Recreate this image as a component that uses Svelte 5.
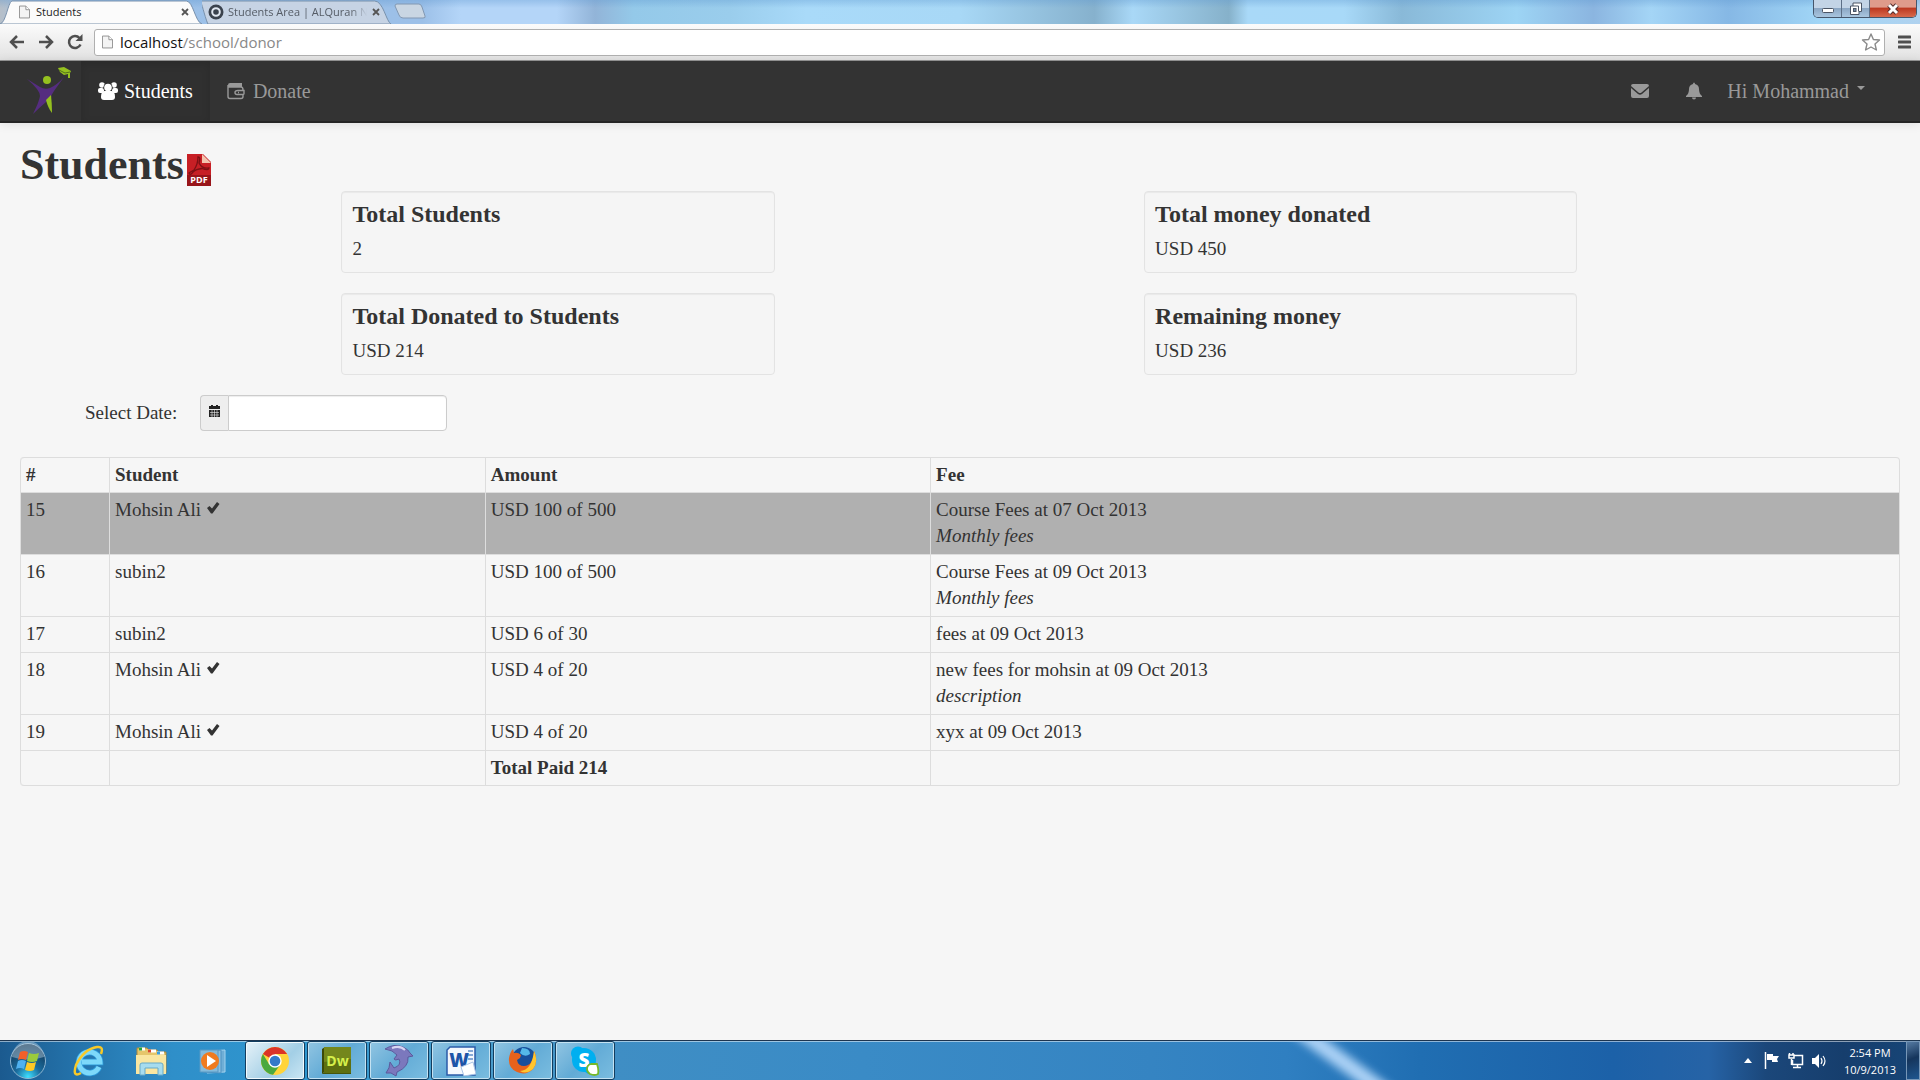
<script>
  const summary = [
    { title: 'Total Students', value: '2' },
    { title: 'Total money donated', value: 'USD 450' },
    { title: 'Total Donated to Students', value: 'USD 214' },
    { title: 'Remaining money', value: 'USD 236' }
  ];

  const payments = [
    { id: 15, student: 'Mohsin Ali', ticked: true, amount: 'USD 100 of 500', fee: 'Course Fees at 07 Oct 2013', note: 'Monthly fees', highlighted: true },
    { id: 16, student: 'subin2', ticked: false, amount: 'USD 100 of 500', fee: 'Course Fees at 09 Oct 2013', note: 'Monthly fees' },
    { id: 17, student: 'subin2', ticked: false, amount: 'USD 6 of 30', fee: 'fees at 09 Oct 2013', note: '' },
    { id: 18, student: 'Mohsin Ali', ticked: true, amount: 'USD 4 of 20', fee: 'new fees for mohsin at 09 Oct 2013', note: 'description' },
    { id: 19, student: 'Mohsin Ali', ticked: true, amount: 'USD 4 of 20', fee: 'xyx at 09 Oct 2013', note: '' }
  ];

  let selectedDate = $state('');
  let address = $state('');
</script>

{#snippet pageIcon()}
  <svg class="page-icon" viewBox="0 0 12 14" aria-hidden="true">
    <path d="M.5.5H7.500L11.500 4.500V13.500H.5Z" fill="#f4f4f4" stroke="#8c8c8c" />
    <path d="M7.500.5V4.500H11.500" fill="#fff" stroke="#8c8c8c" />
  </svg>
{/snippet}

{#snippet closeIcon()}
  <svg width="8" height="8" viewBox="0 0 8 8" aria-hidden="true"><path d="M1 1L7 7M7 1L1 7" stroke="#555" stroke-width="1.800" /></svg>
{/snippet}

<div class="screen">
  <div class="tabstrip">
    <div class="tab current">
      <svg class="tab-shape" viewBox="0 0 206 24" preserveAspectRatio="none" aria-hidden="true">
        <path d="M0 24C6 23 8 3 12 1H190C197 1 199 22 206 24Z" fill="#fbfbfb" stroke="#7890ab" />
      </svg>
      {@render pageIcon()}
      <span class="tab-title">Students</span>
      <button class="tab-close" aria-label="Close Students tab">{@render closeIcon()}</button>
    </div>
    <div class="tab">
      <svg class="tab-shape" viewBox="0 0 198 24" preserveAspectRatio="none" aria-hidden="true">
        <path d="M6 24C2 14 0 3 -2 1H178C187 1 190 22 195 24Z" fill="#c6d3e4" stroke="#7890ab" />
      </svg>
      <svg width="16" height="16" viewBox="0 0 16 16" aria-hidden="true">
        <circle cx="8" cy="8" r="7.500" fill="#3a424d" /><circle cx="8" cy="8" r="3.800" fill="none" stroke="#e0e7f0" stroke-width="2" />
      </svg>
      <span class="tab-title faded">Students Area | ALQuran N</span>
      <button class="tab-close" aria-label="Close Students Area tab">{@render closeIcon()}</button>
    </div>
    <button class="new-tab" aria-label="New tab">
      <svg width="34" height="18" viewBox="0 0 34 18" aria-hidden="true"><path d="M3 1H25Q27 1 28 4L31 13Q32 15 29 15H9Q6 15 5 12L1 3Q1 1 3 1Z" fill="#c9d6e3" stroke="#8298b2" /></svg>
    </button>
    <div class="window-controls">
      <button aria-label="Minimize"><svg width="14" height="14" viewBox="0 0 14 14" aria-hidden="true"><rect x="1.500" y="6.500" width="11" height="4" rx="1" fill="#fff" stroke="#4b5565" /></svg></button>
      <button aria-label="Restore"><svg width="14" height="14" viewBox="0 0 14 14" aria-hidden="true"><path d="M4 1H12.500V9.500H10V12.500H1.500V4H4Z" fill="#fff" stroke="#4b5565" /><path d="M4 4H9.500V9.500" fill="none" stroke="#4b5565" /><rect x="4.500" y="6.500" width="2.500" height="3" fill="#728ba8" stroke="#4b5565" /></svg></button>
      <button class="close" aria-label="Close"><svg width="14" height="14" viewBox="0 0 14 14" aria-hidden="true"><path d="M3 3L11 11M11 3L3 11" stroke="#542d2d" stroke-width="5" /><path d="M3 3L11 11M11 3L3 11" stroke="#fff" stroke-width="3" /></svg></button>
    </div>
  </div>

  <div class="toolbar">
    <button aria-label="Back"><svg width="16" height="14" viewBox="0 0 16 14" aria-hidden="true"><path d="M8 1L2 7L8 13M2 7H15" fill="none" stroke="#4f4f4f" stroke-width="2.500" /></svg></button>
    <button aria-label="Forward"><svg width="16" height="14" viewBox="0 0 16 14" aria-hidden="true"><path d="M8 1L14 7L8 13M14 7H1" fill="none" stroke="#4f4f4f" stroke-width="2.500" /></svg></button>
    <button aria-label="Reload"><svg width="16" height="16" viewBox="0 0 16 16" aria-hidden="true"><path d="M12.500 4A6 6 0 1 0 13.500 10.500" fill="none" stroke="#4f4f4f" stroke-width="2.500" /><path d="M15.500 0V7H8.500Z" fill="#4f4f4f" /></svg></button>
    <div class="omnibox">
      {@render pageIcon()}
      <span class="url">localhost<span class="path">/school/donor</span></span>
      <input aria-label="Address" bind:value={address} />
      <button aria-label="Bookmark this page"><svg width="20" height="18" viewBox="0 0 20 18" aria-hidden="true"><path d="M10 1L12.400 6.500L18.500 7L14 11L15.400 17L10 14L4.600 17L6 11L1.500 7L7.600 6.500Z" fill="#fff" stroke="#8a8a8a" stroke-width="1.400" stroke-linejoin="round" /></svg></button>
    </div>
    <button class="menu" aria-label="Menu"><svg width="13" height="14" viewBox="0 0 13 14" aria-hidden="true"><path d="M1 2H12M1 7H12M1 12H12" stroke="#4f4f4f" stroke-width="3" stroke-linecap="round" /></svg></button>
  </div>

  <nav class="navbar">
    <a class="brand" href="#home" aria-label="Home">
      <svg width="46" height="48" viewBox="0 0 46 48" aria-hidden="true">
        <path d="M1 12L14 20Q19 23 24 21Q31 18 38 10L28 24Q25 28 25 31L20 35Q13 41 7 47Q13 35 14 29Q14 23 1 12Z" fill="#552d80" />
        <path d="M25 28Q26 37 26 46Q22 41 20 33Z" fill="#95c11f" />
        <circle cx="21" cy="13" r="4" fill="#95c11f" />
        <path d="M32 1L38 0L45 4L44 6V11H42V7L38 8L34 5Z" fill="#95c11f" /><path d="M33 3L39 6L44 5" fill="none" stroke="#55701c" />
      </svg>
    </a>
    <a class="nav-link active" href="#students">
      <svg width="20" height="18" viewBox="0 0 20 18" aria-hidden="true" fill="#fff">
        <circle cx="4" cy="3" r="2.800" /><circle cx="16" cy="3" r="2.800" /><rect x="0" y="6" width="6" height="5" rx="2" /><rect x="14" y="6" width="6" height="5" rx="2" /><circle cx="10" cy="5.500" r="4.600" fill="#303030" /><circle cx="10" cy="5.500" r="3.800" /><path d="M3 15Q3 9 6.500 9H13.500Q17 9 17 15Q17 18 14 18H6Q3 18 3 15Z" />
      </svg>
      Students
    </a>
    <a class="nav-link" href="#donate">
      <svg class="wallet" width="18" height="18" viewBox="0 0 18 18" aria-hidden="true">
        <path d="M1 5V3Q1 1 3 1H15V5Z" fill="#999" /><path d="M1 3V14.500Q1 16.500 3 16.500H14Q16 16.500 16 14.500V12.500M1 5H14Q16 5 16 8M17 8.500H11Q8 8.500 8 10.500T10 12.500H16Q17 12.500 17 11.500ZM11 10.500H12" fill="none" stroke="#999" stroke-width="1.400" />
      </svg>
      Donate
    </a>
    <div class="nav-right">
      <a href="#messages" aria-label="Messages"><svg width="18" height="18" viewBox="0 0 18 18" aria-hidden="true"><path d="M0 4Q0 2 2 2H16Q18 2 18 4L10.500 10.500Q9 11.500 7.500 10.500ZM0 6L7 12Q9 13.300 11 12L18 6V14Q18 16 16 16H2Q0 16 0 14Z" fill="#999" /></svg></a>
      <a href="#alerts" aria-label="Notifications"><svg width="18" height="18" viewBox="0 0 18 18" aria-hidden="true"><path d="M8 2Q8 .5 9 .5T10 2Q14 3 14 7Q14 12 17 14V15H1V14Q4 12 4 7Q4 3 8 2ZM7 15.500H11Q11 17.500 9 17.500T7 15.500Z" fill="#999" /></svg></a>
      <button class="user">Hi Mohammad <span class="caret"></span></button>
    </div>
  </nav>

  <main>
    <header class="heading">
      <h1>Students</h1>
      <a href="#pdf" aria-label="Export as PDF">
        <svg width="24" height="32" viewBox="0 0 24 32" aria-hidden="true">
          <path d="M0 0H16L24 8V32H0Z" fill="#c71f25" /><path d="M0 21H24V32H0Z" fill="#98151a" /><path d="M15 0L24 9H15Z" fill="#f3c3ae" />
          <path d="M11 3Q14 3 12 9Q15 15 22 14Q22 17 15 14.500Q9 15 6 18Q3 22 2 19Q5 17 7 16Q11 10 11 3Z" fill="none" stroke="#7c1014" stroke-width="1.300" />
          <text x="12" y="29" text-anchor="middle" font-family="Open Sans, sans-serif" font-size="9" font-weight="700" fill="#fff">PDF</text>
        </svg>
      </a>
    </header>

    <section class="summary" aria-label="Summary">
      {#each summary as item}
        <article class="well">
          <h2>{item.title}</h2>
          <p>{item.value}</p>
        </article>
      {/each}
    </section>

    <form class="filter">
      <label for="date">Select Date:</label>
      <div class="date-group">
        <span class="addon"><svg width="13" height="13" viewBox="0 0 13 13" aria-hidden="true"><path d="M1 1H3V0H5V1H8V0H10V1H12V4H1Z" fill="#222" /><path d="M1 5H12V12H1Z" fill="#222" /><path d="M2 7.500H11M2 10H11M4 5V12M6.500 5V12M9 5V12" stroke="#eee" stroke-width=".6" /></svg></span>
        <input id="date" type="text" bind:value={selectedDate} />
      </div>
    </form>

    <table>
      <colgroup><col class="c-id" /><col class="c-student" /><col class="c-amount" /><col /></colgroup>
      <thead>
        <tr><th scope="col">#</th><th scope="col">Student</th><th scope="col">Amount</th><th scope="col">Fee</th></tr>
      </thead>
      <tbody>
        {#each payments as p (p.id)}
          <tr class:highlighted={p.highlighted}>
            <td>{p.id}</td>
            <td>{p.student}
              {#if p.ticked}<svg class="tick" width="14" height="14" viewBox="0 0 14 14" aria-label="confirmed"><path d="M1 7L3.500 5L6 7.500L11 1L13.500 3L6.500 12.500H5Z" fill="#333" /></svg>{/if}
            </td>
            <td>{p.amount}</td>
            <td>{p.fee}{#if p.note}<br /><em>{p.note}</em>{/if}</td>
          </tr>
        {/each}
      </tbody>
      <tfoot><tr><td></td><td></td><td><b>Total Paid 214</b></td><td></td></tr></tfoot>
    </table>
  </main>

  <footer class="taskbar">
    <button class="start" aria-label="Start">
      <svg width="38" height="38" viewBox="0 0 38 38" aria-hidden="true">
        <defs><radialGradient id="orb" cx=".5" cy=".95" r=".9"><stop offset="0" stop-color="#3ee0ff" /><stop offset=".4" stop-color="#1a6c9e" /><stop offset="1" stop-color="#123453" /></radialGradient></defs>
        <circle cx="19" cy="19" r="17.500" fill="url(#orb)" stroke="#8fb6d2" /><path d="M3 15A16 16 0 0 1 35 15Q19 20 3 15Z" fill="#bdd3e3" opacity=".45" />
        <path d="M11 10Q15 8 19 10L17 18Q13 16 9 18Z" fill="#f2602a" /><path d="M20 11Q25 13 30 11L28 19Q23 21 18 19Z" fill="#9bcb3c" /><path d="M9 19Q13 17 17 19L15 27Q11 25 7 27Z" fill="#4fb1f0" /><path d="M18 20Q23 22 27 20L25 28Q21 30 16 28Z" fill="#ffc925" />
      </svg>
    </button>
    <button class="task" aria-label="Internet Explorer">
      <svg width="32" height="32" viewBox="0 0 32 32" aria-hidden="true">
        <path d="M26 22A10.500 10.500 0 1 1 27 17H9" fill="none" stroke="#2d9bdb" stroke-width="6.500" /><path d="M26 22A10.500 10.500 0 1 1 27 17H9" fill="none" stroke="#7dd9fa" stroke-width="5" /><path d="M8 28Q-1 33 3 20Q11 4 24 2Q31 1 28 9" fill="none" stroke="#f7c928" stroke-width="2.500" />
      </svg>
    </button>
    <button class="task" aria-label="Windows Explorer">
      <svg width="34" height="32" viewBox="0 0 34 32" aria-hidden="true">
        <path d="M3 3H13L15 5H23L25 7H32V28H3Z" fill="#e5c66b" stroke="#a8873e" /><path d="M5 4H11" stroke="#fff" stroke-width="3" /><path d="M14 6H22M23 8H30" stroke="#fff" stroke-width="3" /><path d="M5 4H8" stroke="#26a53c" stroke-width="3" /><path d="M14 6H17" stroke="#d84b2a" stroke-width="3" /><path d="M23 8H26" stroke="#3aa0df" stroke-width="3" />
        <path d="M2 10H32V29H2Z" fill="#f9e6a1" /><path d="M6 30V20Q6 18 8 18H27Q29 18 29 20V30H24V23H11V30Z" fill="#a6dcef" stroke="#67aac9" />
      </svg>
    </button>
    <button class="task" aria-label="Media Player">
      <svg width="30" height="28" viewBox="0 0 30 28" aria-hidden="true">
        <path d="M9 4L27 3V25L9 26Z" fill="#6faed6" stroke="#a3d3ef" /><path d="M5 4L23 3V26L5 25Z" fill="#8bc1e2" stroke="#4e91c1" /><path d="M2 3H20V25H2Z" fill="#84bbdc" stroke="#5798c4" />
        <circle cx="12" cy="14" r="9" fill="#f07b1f" /><path d="M9 8L18 14L9 20Z" fill="#fff" />
      </svg>
    </button>
    <button class="task open front" aria-label="Chrome">
      <svg width="30" height="30" viewBox="0 0 30 30" aria-hidden="true">
        <circle cx="15" cy="15" r="14" fill="#ffd43a" /><path d="M15 15L2.900 8A14 14 0 0 1 27.100 8L15 8Z" fill="#db3327" /><path d="M2.900 8A14 14 0 0 0 13 28.800L20 19L15 15L9 18Z" fill="#4aa93f" /><circle cx="15" cy="15" r="6.700" fill="#fff" /><circle cx="15" cy="15" r="5.300" fill="#3479c9" />
      </svg>
    </button>
    <button class="task open" aria-label="Dreamweaver">
      <svg width="30" height="28" viewBox="0 0 30 28" aria-hidden="true">
        <path d="M0 2L3 0V24L0 27Z" fill="#3d4a08" /><path d="M0 27L3 24H29V27Z" fill="#46560b" /><path d="M2 0H29V26H2Z" fill="#5d6f11" /><path d="M2 0H29V12L2 15Z" fill="#74871c" />
        <text x="15.500" y="19" text-anchor="middle" font-family="Open Sans, sans-serif" font-size="14" font-weight="700" fill="#d6f04b">Dw</text>
      </svg>
    </button>
    <button class="task open" aria-label="MySQL client">
      <svg width="30" height="32" viewBox="0 0 30 32" aria-hidden="true">
        <path d="M1 4Q10 -2 19 2Q25 5 26 8L29 11L24 12Q25 22 13 27L12 31L7 28L2 28Q6 23 6 17L10 23Q18 20 15 14Q11 16 10 14L13 10Q9 5 1 4Z" fill="#7b78bd" stroke="#5c599c" /><path d="M8 3Q16 0 21 5" fill="none" stroke="#d8d5f2" stroke-width="2" />
      </svg>
    </button>
    <button class="task open" aria-label="Word">
      <svg width="30" height="30" viewBox="0 0 30 30" aria-hidden="true">
        <path d="M4 1H29V29H1V4Z" fill="#f4f8fd" stroke="#2b5ba8" stroke-width="1.500" /><path d="M22 5H27M22 9H27M22 13H27" stroke="#86a9d6" stroke-width="2" />
        <text x="13" y="21" text-anchor="middle" font-family="Open Sans, sans-serif" font-size="19" font-weight="800" fill="#1d55a8">W</text><path d="M15 21L27 16L30 28L18 30Z" fill="#fff" stroke="#aac4e5" />
      </svg>
    </button>
    <button class="task open" aria-label="Firefox">
      <svg width="30" height="30" viewBox="0 0 30 30" aria-hidden="true">
        <circle cx="16" cy="13" r="12" fill="#174f9c" /><path d="M14 2Q22 2 22 8Q17 12 12 7Z" fill="#55b8e8" /><path d="M26 5Q31 15 25 23Q18 30 9 26Q0 22 1 12Q2 6 5 3L6 7Q10 6 13 9L12 12L9 14Q10 20 16 20Q25 20 26 5Z" fill="#e7621c" /><path d="M26 5Q31 15 25 23Q18 29 12 25Q24 24 26 5Z" fill="#ffc62f" />
      </svg>
    </button>
    <button class="task open" aria-label="Skype">
      <svg width="30" height="30" viewBox="0 0 30 30" aria-hidden="true">
        <circle cx="14" cy="14" r="12" fill="#00aff0" /><circle cx="8" cy="7.500" r="7" fill="#00aff0" /><circle cx="20" cy="21" r="7" fill="#00aff0" />
        <text x="14" y="21" text-anchor="middle" font-family="Open Sans, sans-serif" font-size="19" font-weight="800" fill="#fff">S</text><path d="M17 23Q17 19 21 18H27Q29 24 28 28Q25 30 20 28Q17 26 17 23Z" fill="#fff" stroke="#76b82a" stroke-width="1.800" />
      </svg>
    </button>
    <div class="tray">
      <button aria-label="Show hidden icons"><svg width="8" height="5" viewBox="0 0 8 5" aria-hidden="true"><path d="M0 5L4 0L8 5Z" fill="#fff" /></svg></button>
      <button aria-label="Action center"><svg width="16" height="17" viewBox="0 0 16 17" aria-hidden="true"><path d="M1.500 0V17" stroke="#fff" stroke-width="1.500" /><path d="M3 2H9V4H15L13 7L14 10H8V8H3Z" fill="#fff" /></svg></button>
      <button aria-label="Network"><svg width="16" height="17" viewBox="0 0 16 17" aria-hidden="true"><path d="M6 3.500H14.500V12.500H4.500V8M9.500 13V15.500M5 15.500H13M3.500 7V13M1.500 1V3M5 1V3M1 3H6V6H1Z" fill="none" stroke="#fff" stroke-width="1.500" /></svg></button>
      <button aria-label="Volume"><svg width="16" height="16" viewBox="0 0 16 16" aria-hidden="true"><path d="M0 5H3L7 1V15L3 11H0Z" fill="#fff" /><path d="M9 5Q11 8 9 11M11 3Q15 8 11 13" fill="none" stroke="#fff" stroke-width="1.200" /></svg></button>
      <div class="clock"><time>2:54 PM</time><time>10/9/2013</time></div>
      <button class="show-desktop" aria-label="Show desktop"></button>
    </div>
  </footer>
</div>

<style>
  :global(body) { background: #f6f6f6; }
  .screen, .screen :global(*) { box-sizing: border-box; }
  .screen {
    min-height: 100vh;
    display: flex;
    flex-direction: column;
    color: #333;
    font: 19px/26px "Liberation Serif", serif;
  }
  button { border: 0; padding: 0; background: none; font: inherit; color: inherit; display: flex; align-items: center; justify-content: center; }
  svg { flex: none; }
  a { color: inherit; text-decoration: none; }

  .tabstrip {
    display: flex;
    height: 24px;
    font: 11px/20px "Open Sans", sans-serif;
    background:
      linear-gradient(#5c96cf55, transparent 8px),
      linear-gradient(90deg, #b6bfc9 0, #9dc1e8 2%, #9cc0e8 22%, #b4d5f8 24%, #b4d5f8 29%, #92b4d8 31%, #94c9e9 33%, #9acdec 38%, #a9daf9 42%, #a8d8f6 50%, #86b1cd 57%, #a9d8f7 59%, #86b1ca 64%, #a9d9f8 65%, #a8d9f8 70%, #89b9d8 73%, #9dd4f4 79%, #8bb5e0 83%, #a4d5f6 86%, #86b8e5 90%, #a2d7f7 95%, #b0d2ef);
  }
  .tab { position: relative; z-index: 0; display: flex; align-items: center; gap: 4px; width: 192px; padding: 0 13px 0 6px; color: #555c66; }
  .tab.current { width: 202px; gap: 6px; padding: 0 12px 0 19px; color: #222; z-index: 1; }
  .tab-shape { position: absolute; inset: 0; width: 100%; height: 100%; z-index: -1; }
  .tab-title { flex: 1; min-width: 0; white-space: nowrap; overflow: hidden; }
  .faded { mask-image: linear-gradient(90deg, #000 88%, transparent); }
  .page-icon { width: 11px; height: 14px; }
  .tab-close { width: 10px; height: 14px; }
  .new-tab { width: 34px; }
  .window-controls { display: flex; height: 18px; margin: 0 3px 0 auto; border: 1px solid #46566b; border-top: 0; border-radius: 0 0 5px 5px; overflow: hidden; }
  .window-controls button { width: 28px; background: linear-gradient(#c3d4e6 45%, #8ca7c4 50%, #a9c6df); border-right: 1px solid #5d7087; }
  .window-controls .close { width: 46px; border: 0; background: linear-gradient(#df9b8b 40%, #bd3a22 50%, #d8694c); }

  .toolbar {
    display: flex;
    align-items: center;
    gap: 13px;
    height: 37px;
    padding: 0 9px;
    background: linear-gradient(#fbfbfb, #e2e2e2);
    border-bottom: 1px solid #969696;
  }
  .omnibox {
    flex: 1;
    display: flex;
    align-items: center;
    gap: 7px;
    height: 27px;
    margin-left: -2px;
    padding: 0 3px 0 7px;
    background: #fff;
    border: 1px solid #b0b0b0;
    border-radius: 3px;
    font: 15px/20px "Open Sans", sans-serif;
  }
  .omnibox input { flex: 1; min-width: 0; border: 0; background: none; outline: 0; font: inherit; }
  .url { color: #111; }
  .path { color: #888; }

  .navbar {
    display: flex;
    height: 62px;
    background: #333;
    border-bottom: 2px solid #252525;
    box-shadow: 0 1px 10px #0000001a;
    color: #999;
    font-size: 20px;
  }
  .brand { display: flex; align-items: center; padding: 0 9px 0 26px; }
  .nav-link { display: flex; align-items: center; gap: 6px; padding: 0 17px; }
  .nav-link.active { color: #fff; background: #303030; box-shadow: inset 0 3px 8px #00000020; }
  .wallet { margin-right: 2px; }
  .nav-right { display: flex; align-items: center; gap: 36px; margin-left: auto; padding-right: 55px; }
  .nav-right a { display: flex; }
  .user { gap: 8px; margin-left: -12px; }
  .caret { border: 4px solid transparent; border-top-color: #999; border-bottom: 0; margin-bottom: 6px; }

  main { flex: 1; padding: 16px 20px; }
  .heading { display: flex; align-items: center; gap: 3px; height: 52px; }
  h1 { margin: 0; font-size: 44px; line-height: 56px; }
  .heading a { display: flex; margin-top: 9px; }
  .summary { display: grid; grid-template-columns: 27.800% 27.800%; column-gap: 23.700%; row-gap: 20px; margin: 0 0 20px 17.100%; }
  .well { border: 1px solid #e3e3e3; border-radius: 4px; background: #f5f5f5; box-shadow: inset 0 1px 1px #0000000d; padding: 9px 10px; }
  h2 { margin: 0 0 8px; font-size: 24px; line-height: 26px; }
  p { margin: 0; line-height: 28px; }

  .filter { display: flex; align-items: center; gap: 23px; margin-bottom: 26px; padding-left: 65px; }
  .date-group { display: flex; height: 36px; }
  .addon { display: flex; justify-content: center; width: 28px; padding-top: 9px; border: 1px solid #ccc; border-right: 0; border-radius: 4px 0 0 4px; background: #eee; }
  .date-group input { width: 219px; border: 1px solid #ccc; border-radius: 0 4px 4px 0; background: #fff; box-shadow: inset 0 1px 1px #00000013; font: inherit; padding: 4px 6px; }

  table { width: 100%; table-layout: fixed; border-collapse: separate; border-spacing: 0; border: 1px solid #ddd; border-left: 0; border-radius: 4px; }
  .c-id { width: 89px; }
  .c-student { width: 20%; }
  .c-amount { width: 23.700%; }
  th, td { padding: 4px 5px; border-left: 1px solid #ddd; text-align: left; vertical-align: top; }
  td { padding-bottom: 5px; border-top: 1px solid #ddd; }
  th:first-child { border-top-left-radius: 4px; }
  tfoot td { padding-bottom: 4px; }
  tfoot td:first-child { border-bottom-left-radius: 4px; }
  .highlighted td { background: #b0b0b0; }
  .tick { vertical-align: 1px; }

  .taskbar {
    display: flex;
    align-items: center;
    gap: 2px;
    height: 40px;
    padding-left: 1px;
    border-top: 1px solid #1d3550;
    box-shadow: inset 0 1px #ffffff80;
    background: linear-gradient(90deg, #1b5a8f 0, #2473ab 4%, #2f8fc9 9%, #2e97d0 16%, #4a9fce 24%, #3f8ec4 32%, #3a8bc6 45%, #3584c2 60%, #2f7fc1 67%, #206eb2 74%, #1c61a8 84%, #2663a6 89%, #1b477a 92%, #163e6d 96%, #174577 100%);
    position: relative;
    isolation: isolate;
    overflow: hidden;
  }
  .taskbar::before { content: ""; position: absolute; z-index: -1; left: 69.500%; top: -40px; width: 16px; height: 120px; background: #a9d0f5; filter: blur(4px); transform: rotate(-54deg); }
  .start { width: 54px; height: 39px; }
  .start + .task { margin-left: 2px; }
  .task { width: 60px; height: 39px; border-radius: 3px; }
  .open { border: 1px solid #123d5f; background: linear-gradient(135deg, #92c5e2, #62abd6 50%, #7bbde0); box-shadow: inset 0 0 0 1px #c4e2f2; }
  .front { background: linear-gradient(135deg, #e6f2f8, #a3cfe6 60%, #cbe7f4); box-shadow: inset 0 0 0 1px #f2fafd; }
  .tray { display: flex; align-items: center; gap: 8px; height: 100%; margin-left: auto; color: #fff; }
  .tray button:first-child { margin-right: 4px; }
  .clock { display: flex; flex-direction: column; align-items: center; width: 68px; font: 11px/17px "Open Sans", sans-serif; }
  .tray .show-desktop { align-self: stretch; width: 14px; margin-left: -6px; border: 1px solid #7797b8; background: linear-gradient(160deg, #557aa2, #15355c 45%, #1f568f); }
</style>
